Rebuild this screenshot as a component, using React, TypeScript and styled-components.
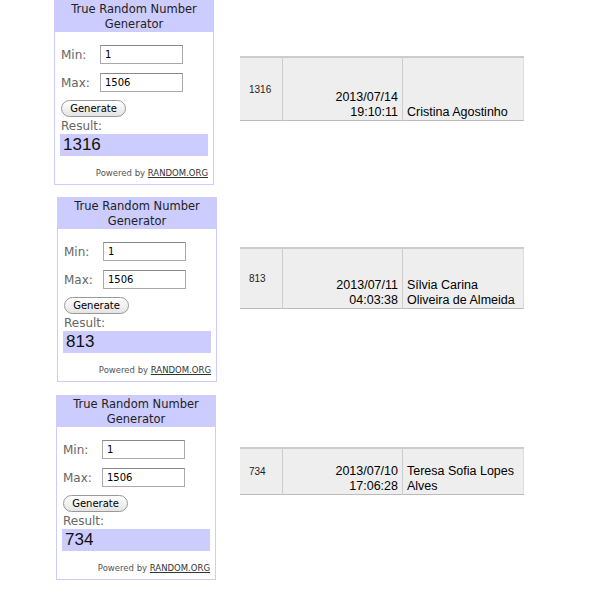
import React, { FC } from 'react'
import styled, { createGlobalStyle } from 'styled-components'

const GlobalStyle = createGlobalStyle`
  body {
    margin: 0;
    background: #fff;
    font-family: "DejaVu Sans", Verdana, sans-serif;
  }
`

const lavender = '#ccccff'

interface Draw {
  result: string
  id: string
  date: string
  time: string
  name: string[]
}

const draws: (Draw & { top: number; left: number; tableTop: number; rowHeight: number })[] = [
  { result: '1316', id: '1316', date: '2013/07/14', time: '19:10:11', name: ['Cristina Agostinho'], top: 0, left: 54, tableTop: 56, rowHeight: 62 },
  { result: '813', id: '813', date: '2013/07/11', time: '04:03:38', name: ['Sílvia Carina', 'Oliveira de Almeida'], top: 12, left: 57, tableTop: 50, rowHeight: 59 },
  { result: '734', id: '734', date: '2013/07/10', time: '17:06:28', name: ['Teresa Sofia Lopes', 'Alves'], top: 13, left: 56, tableTop: 52, rowHeight: 45 },
]

const Page = styled.div`
  display: flex;
  flex-direction: column;
`

const Section = styled.div<{ $top: number }>`
  display: grid;
  grid-template-columns: 240px auto;
  justify-items: start;
  align-items: start;
  margin-top: ${p => p.$top}px;
`

const Widget = styled.div<{ $left: number }>`
  margin-left: ${p => p.$left}px;
  width: 160px;
  box-sizing: border-box;
  border: 1px solid ${lavender};
  background: #fff;
`

const Header = styled.div`
  background: ${lavender};
  height: 31px;
  box-sizing: border-box;
  padding-top: 1px;
  text-align: center;
  font-size: 11.5px;
  line-height: 15px;
  color: #222;
`

const Body = styled.div`
  padding: 13px 5px 5px 5px;
  display: flex;
  flex-direction: column;
`

const FieldRow = styled.div<{ $gap?: number }>`
  display: flex;
  align-items: center;
  height: 19px;
  margin-top: ${p => p.$gap || 0}px;
`

const Label = styled.span`
  width: 40px;
  padding-left: 1px;
  box-sizing: border-box;
  font-size: 12px;
  color: #666;
`

const Input = styled.input`
  width: 83px;
  height: 19px;
  box-sizing: border-box;
  border: 1px solid #aaa;
  border-top-color: #888;
  padding: 0 0 0 4px;
  font-family: "DejaVu Sans", Verdana, sans-serif;
  font-size: 10px;
  color: #000;
  background: #fff;
  outline: none;
`

const GenerateButton = styled.button`
  margin: 8px 0 0 1px;
  width: 65px;
  height: 17px;
  padding: 0;
  border: 1px solid #999;
  border-radius: 9px;
  background: linear-gradient(#ffffff, #e4e4e4);
  font-family: "DejaVu Sans", Verdana, sans-serif;
  font-size: 10px;
  line-height: 15px;
  color: #000;
`

const ResultLabel = styled.div`
  margin-top: 2px;
  padding-left: 1px;
  font-size: 12px;
  line-height: 15px;
  color: #666;
`

const ResultBand = styled.div`
  background: ${lavender};
  height: 22px;
  padding-left: 3px;
  font-family: "Liberation Sans", Arial, sans-serif;
  font-size: 17px;
  line-height: 22px;
  color: #111;
`

const Powered = styled.div`
  margin-top: 11px;
  text-align: right;
  font-size: 8.5px;
  line-height: 12px;
  color: #555;

  a {
    color: #333;
    text-decoration: underline;
  }
`

const Table = styled.table<{ $top: number }>`
  margin-top: ${p => p.$top}px;
  width: 284px;
  table-layout: fixed;
  border-collapse: collapse;
  background: #eeeeee;
  border-top: 2px solid #cccccc;
  border-bottom: 1px solid #bbbbbb;
  border-right: 1px solid #dddddd;
  font-family: "Liberation Sans", Arial, Helvetica, sans-serif;
`

const IdCell = styled.td<{ $h: number }>`
  width: 33px;
  height: ${p => p.$h}px;
  padding: 0 0 0 9px;
  vertical-align: middle;
  font-size: 10px;
  color: #222;
`

const DateCell = styled.td`
  width: 115px;
  border-left: 1px solid #cccccc;
  padding: 0 4px 0 0;
  text-align: right;
  vertical-align: bottom;
  font-size: 12.5px;
  line-height: 15px;
  color: #000;
`

const NameCell = styled.td`
  border-left: 1px solid #cccccc;
  padding: 0 0 0 4px;
  text-align: left;
  vertical-align: bottom;
  font-size: 12.5px;
  line-height: 15px;
  color: #000;
  white-space: nowrap;
`

const Generator: FC<{ left: number; result: string }> = ({ left, result }) => (
  <Widget $left={left}>
    <Header>
      True Random Number
      <br />
      Generator
    </Header>
    <Body>
      <FieldRow>
        <Label>Min:</Label>
        <Input defaultValue="1" />
      </FieldRow>
      <FieldRow $gap={9}>
        <Label>Max:</Label>
        <Input defaultValue="1506" />
      </FieldRow>
      <div>
        <GenerateButton>Generate</GenerateButton>
      </div>
      <ResultLabel>Result:</ResultLabel>
      <ResultBand>{result}</ResultBand>
      <Powered>
        Powered by <a>RANDOM.ORG</a>
      </Powered>
    </Body>
  </Widget>
)

const App: FC = () => (
  <Page>
    <GlobalStyle />
    {draws.map(d => (
      <Section key={d.id} $top={d.top}>
        <Generator left={d.left} result={d.result} />
        <Table $top={d.tableTop}>
          <tbody>
            <tr>
              <IdCell $h={d.rowHeight}>{d.id}</IdCell>
              <DateCell>
                {d.date}
                <br />
                {d.time}
              </DateCell>
              <NameCell>
                {d.name.map((n, i) => (
                  <React.Fragment key={i}>
                    {i > 0 && <br />}
                    {n}
                  </React.Fragment>
                ))}
              </NameCell>
            </tr>
          </tbody>
        </Table>
      </Section>
    ))}
  </Page>
)

export default App
